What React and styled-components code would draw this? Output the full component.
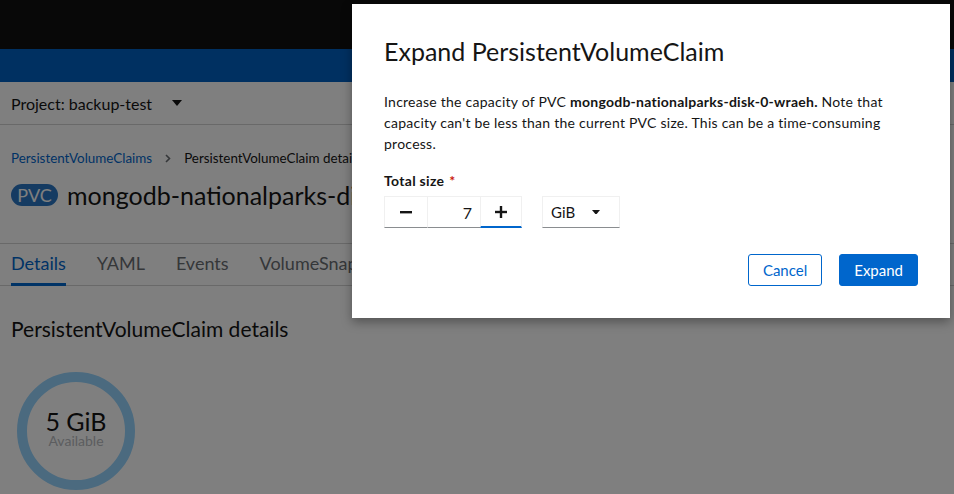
import React from "react";
import styled, { createGlobalStyle } from "styled-components";

const FONT = '"Lato", "Liberation Sans", sans-serif';

const Global = createGlobalStyle`
  html, body { margin: 0; padding: 0; }
  body {
    font-family: ${FONT};
    color: #151515;
    background: #ffffff;
    width: 954px;
    height: 494px;
    overflow: hidden;
  }
  * { box-sizing: border-box; }
`;

const Page = styled.div`
  position: relative;
  width: 954px;
  height: 494px;
  overflow: hidden;
  background: #fff;
`;

const Masthead = styled.div`
  height: 49px;
  background: #111111;
`;

const NavBar = styled.div`
  height: 33px;
  background: #0061c2;
`;

const ProjectBar = styled.div`
  height: 43px;
  border-bottom: 1px solid #d2d2d2;
  display: flex;
  align-items: center;
  padding: 0 11px;
  gap: 20px;
  font-size: 16px;
  color: #151515;
`;

const Caret = ({ w = 10 }) => (
  <svg width={w} height={w * 0.6} viewBox="0 0 10 6">
    <path d="M0 0 L10 0 L5 6 Z" fill="currentColor" />
  </svg>
);

const Content = styled.div`
  padding: 0 11px;
`;

const Breadcrumb = styled.nav`
  display: flex;
  align-items: center;
  margin-top: 23px;
  height: 20px;
  font-size: 13.4px;
  gap: 13px;
`;

const Crumb = styled.span`
  color: ${(p) => (p.$link ? "#0066cc" : "#151515")};
`;

const Chevron = () => (
  <svg width="6" height="9" viewBox="0 0 6 9">
    <path d="M1 1 L4.5 4.5 L1 8" stroke="#6a6e73" strokeWidth="1.6" fill="none" />
  </svg>
);

const TitleRow = styled.div`
  display: flex;
  align-items: center;
  gap: 9px;
  margin-top: 14px;
  height: 26px;
  white-space: nowrap;
`;

const Badge = styled.span`
  display: inline-flex;
  align-items: center;
  justify-content: center;
  height: 22px;
  width: 47px;
  border-radius: 12px;
  background: #2b77c4;
  color: #fff;
  font-size: 18px;
`;

const Title = styled.h1`
  margin: 0;
  font-size: 25px;
  font-weight: 400;
`;

const Tabs = styled.div`
  display: flex;
  margin-top: 35px;
  border-top: 1px solid #d2d2d2;
  border-bottom: 1px solid #d2d2d2;
  height: 43px;
  padding-left: 11px;
  gap: 31px;
`;

const Tab = styled.div`
  display: flex;
  align-items: center;
  font-size: 18px;
  color: ${(p) => (p.$active ? "#0066cc" : "#6a6e73")};
  border-bottom: 3px solid ${(p) => (p.$active ? "#0066cc" : "transparent")};
  margin-bottom: -1px;
  padding-bottom: 2px;
  white-space: nowrap;
`;

const SectionHeading = styled.h2`
  margin: 30px 0 0;
  font-size: 21px;
  font-weight: 400;
  line-height: 26px;
`;

const Donut = styled.div`
  position: relative;
  width: 120px;
  height: 120px;
  margin: 29px 0 0 5px;
  display: flex;
  flex-direction: column;
  align-items: center;
  justify-content: center;
`;

const DonutRing = styled.svg`
  position: absolute;
  inset: 0;
`;

const DonutValue = styled.div`
  font-size: 25px;
  line-height: 26px;
  margin-top: -6px;
`;

const DonutLabel = styled.div`
  font-size: 14px;
  line-height: 14px;
  color: #b8bbbe;
`;

const Backdrop = styled.div`
  position: absolute;
  inset: 0;
  background: rgba(0, 0, 0, 0.5);
`;

const Modal = styled.div`
  position: absolute;
  left: 352px;
  top: 4px;
  width: 598px;
  background: #fff;
  padding: 31px 32px 32px;
  box-shadow: 0 4px 10px rgba(0, 0, 0, 0.35);
`;

const ModalTitle = styled.h1`
  margin: 0;
  font-size: 25px;
  font-weight: 400;
  line-height: 32px;
`;

const ModalText = styled.p`
  margin: 24px 0 0;
  font-size: 14px;
  line-height: 21px;
  letter-spacing: 0.25px;
`;

const Label = styled.div`
  margin-top: 17px;
  font-size: 14px;
  font-weight: 700;
  line-height: 20px;
  letter-spacing: 0.3px;
`;

const Required = styled.span`
  color: #c9190b;
  margin-left: 5px;
`;

const Controls = styled.div`
  display: flex;
  align-items: stretch;
  gap: 20px;
  margin-top: 5px;
  height: 32px;
`;

const NumberGroup = styled.div`
  display: flex;
`;

const StepButton = styled.button`
  width: ${(p) => p.$w}px;
  height: 32px;
  background: #fff;
  border: 1px solid #f0f0f0;
  border-bottom: ${(p) => (p.$focus ? "2px solid #0066cc" : "1px solid #8a8d90")};
  display: flex;
  align-items: center;
  justify-content: center;
  padding: 0;
  color: #151515;
`;

const NumberInput = styled.div`
  width: 52px;
  height: 32px;
  border-top: 1px solid #f0f0f0;
  border-bottom: 1px solid #8a8d90;
  display: flex;
  align-items: center;
  justify-content: flex-end;
  padding-right: 8px;
  font-size: 16px;
`;

const Select = styled.div`
  width: 78px;
  height: 32px;
  border: 1px solid #f0f0f0;
  border-bottom: 1px solid #8a8d90;
  display: flex;
  align-items: center;
  justify-content: space-between;
  padding: 0 19px 0 8px;
  font-size: 15px;
`;

const Footer = styled.div`
  display: flex;
  justify-content: flex-end;
  gap: 17px;
  margin-top: 26px;
`;

const Button = styled.button`
  height: 32px;
  padding: 0 14px;
  border-radius: 3px;
  font-family: ${FONT};
  font-size: 15px;
  border: 1px solid #0066cc;
  background: ${(p) => (p.$primary ? "#0066cc" : "#fff")};
  color: ${(p) => (p.$primary ? "#fff" : "#0066cc")};
`;

const Minus = () => (
  <svg width="12" height="12" viewBox="0 0 12 12">
    <rect x="0" y="5" width="12" height="2.4" fill="#151515" />
  </svg>
);

const Plus = () => (
  <svg width="12" height="12" viewBox="0 0 12 12">
    <rect x="0" y="4.8" width="12" height="2.4" fill="#151515" />
    <rect x="4.8" y="0" width="2.4" height="12" fill="#151515" />
  </svg>
);

export default function App() {
  return (
    <Page>
      <Global />
      <Masthead />
      <NavBar />
      <ProjectBar>
        <span>Project: backup-test</span>
        <Caret />
      </ProjectBar>
      <Content>
        <Breadcrumb>
          <Crumb $link>PersistentVolumeClaims</Crumb>
          <Chevron />
          <Crumb>PersistentVolumeClaim details</Crumb>
        </Breadcrumb>
        <TitleRow>
          <Badge>PVC</Badge>
          <Title>mongodb-nationalparks-disk-0-wraeh</Title>
        </TitleRow>
      </Content>
      <Tabs>
        <Tab $active>Details</Tab>
        <Tab>YAML</Tab>
        <Tab>Events</Tab>
        <Tab>VolumeSnapshots</Tab>
      </Tabs>
      <Content>
        <SectionHeading>PersistentVolumeClaim details</SectionHeading>
        <Donut>
          <DonutRing width="120" height="120" viewBox="0 0 120 120">
            <circle cx="60" cy="60" r="54" fill="none" stroke="#96d4ff" strokeWidth="10" />
          </DonutRing>
          <DonutValue>5 GiB</DonutValue>
          <DonutLabel>Available</DonutLabel>
        </Donut>
      </Content>
      <Backdrop />
      <Modal>
        <ModalTitle>Expand PersistentVolumeClaim</ModalTitle>
        <ModalText>
          Increase the capacity of PVC <strong>mongodb-nationalparks-disk-0-wraeh.</strong> Note that
          capacity can't be less than the current PVC size. This can be a time-consuming process.
        </ModalText>
        <Label>
          Total size<Required>*</Required>
        </Label>
        <Controls>
          <NumberGroup>
            <StepButton $w={44}>
              <Minus />
            </StepButton>
            <NumberInput>7</NumberInput>
            <StepButton $w={42} $focus>
              <Plus />
            </StepButton>
          </NumberGroup>
          <Select>
            <span>GiB</span>
            <Caret w={8} />
          </Select>
        </Controls>
        <Footer>
          <Button>Cancel</Button>
          <Button $primary>Expand</Button>
        </Footer>
      </Modal>
    </Page>
  );
}
